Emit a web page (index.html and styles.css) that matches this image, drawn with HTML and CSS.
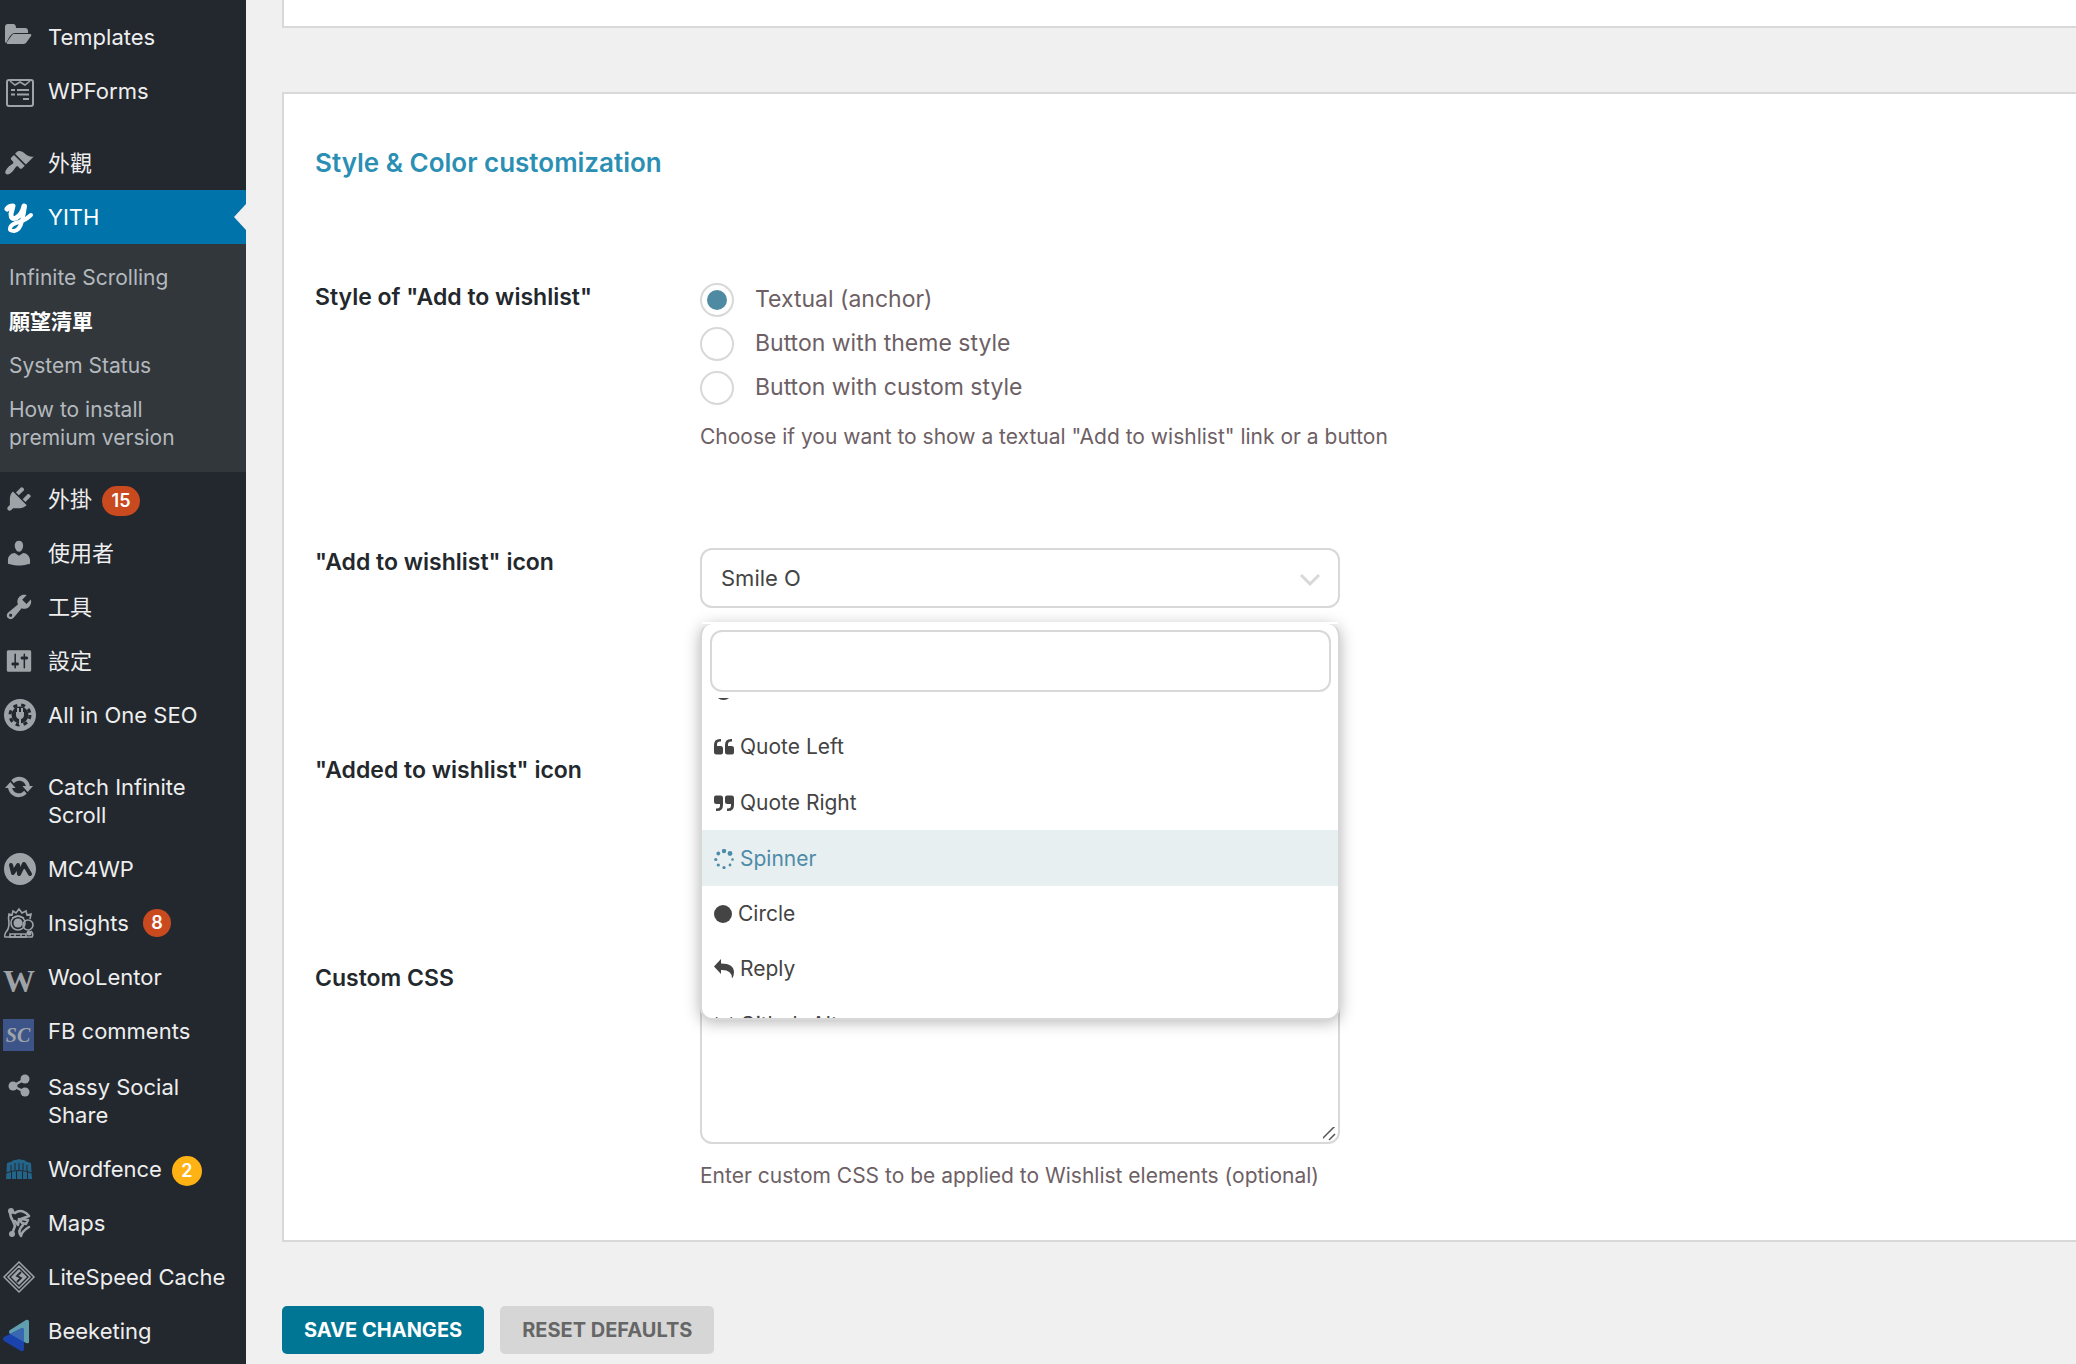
FILE: index.html
```html
<!DOCTYPE html>
<html lang="zh-Hant">
<head>
<meta charset="utf-8">
<meta name="viewport" content="width=device-width, initial-scale=1">
<title>YITH Wishlist</title>
<link rel="stylesheet" href="styles.css">
</head>
<body>
<div class="layout">
  <nav class="sidebar" aria-label="Admin menu">
    <ul class="menu">
      <li><a class="menu-link" href="#"><svg class="icon" viewBox="0 0 32 32"><path d="M2 21V6q0-3 3-3h5q3 0 3 4h9q3 0 3 3v2H12q-3 0-5 3l-4 7z"/><path d="M11 13h16q2 0 1 2l-5 7q-1 1-3 1H5q-2 0-1-2l5-7q1-1 2-1z"/></svg><span>Templates</span></a></li>
      <li><a class="menu-link" href="#"><svg class="icon" viewBox="0 0 32 32"><g fill="none" stroke="currentColor" stroke-width="2"><rect x="4" y="5" width="26" height="26" rx="2"/><path d="M7 6l5 4 5-3 5 3 5-4" stroke-width="1.6"/><path d="M8 15h4M14 15h12M8 19.500h4M14 19.500h12M20 24h6"/></g></svg><span>WPForms</span></a></li>
      <li class="separator"></li>
      <li><a class="menu-link" href="#"><svg class="icon" viewBox="-0.5 -0.5 21 21"><path d="M14.480 11.060L7.410 3.990l1.500-1.500c.5-.56 2.300-.47 3.510.32 1.210.8 1.430 1.280 2.910 2.100 1.180.64 2.450 1.260 4.450.85zm-.71.71L6.700 4.700 4.930 6.470c-.39.39-.39 1.020 0 1.410l1.060 1.060c.39.39.39 1.030 0 1.420-.6.6-1.430 1.110-2.210 1.690-.35.26-.7.53-1.010.84C1.430 14.230.4 16.080 1.400 17.070c.99 1 2.840-.03 4.180-1.360.31-.31.58-.66.85-1.020.57-.78 1.080-1.610 1.690-2.210.39-.39 1.020-.39 1.410 0l1.060 1.060c.39.39 1.020.39 1.410 0z"/></svg><span>外觀</span></a></li>
      <li>
        <a class="menu-link menu-link--current" href="#" aria-current="true"><svg class="icon" viewBox="0 0 32 32"><g fill="none" stroke="currentColor" stroke-linecap="round" stroke-linejoin="round"><path d="M4 8q2-3 6-3-1 4-2 8 0 6 5 4 6-3 8-12" stroke-width="5"/><path d="M22 5q-1 8-3 15-2 9-8 10-5 0-4-3 1-4 9-6 7-2 12-7" stroke-width="4"/></g></svg><span>YITH</span></a>
        <ul class="submenu">
          <li><a class="submenu-link" href="#">Infinite Scrolling</a></li>
          <li><a class="submenu-link submenu-link--current" href="#">願望清單</a></li>
          <li><a class="submenu-link" href="#">System Status</a></li>
          <li><a class="submenu-link" href="#">How to install premium version</a></li>
        </ul>
      </li>
      <li><a class="menu-link" href="#"><svg class="icon" viewBox="-0.5 -0.5 21 21"><path d="M13.110 4.360L9.870 7.600 8 5.730l3.240-3.240c.35-.34 1.050-.2 1.560.32.52.51.66 1.210.31 1.550zm-8 1.770l.91-1.120 9.010 9.010-1.190.84c-.71.71-2.630 1.160-3.820 1.160H6.140L4.900 17.260c-.59.59-1.540.59-2.120 0-.59-.58-.59-1.530 0-2.120l1.240-1.240v-3.880c0-1.130.4-3.190 1.090-3.890zm7.260 3.970l3.240-3.240c.34-.35 1.040-.21 1.550.31.52.51.66 1.210.31 1.550l-3.240 3.250z"/></svg><span>外掛</span><span class="badge badge--wide">15</span></a></li>
      <li><a class="menu-link" href="#"><svg class="icon" viewBox="-0.5 -0.5 21 21"><path d="M10 9.250c-2.270 0-2.730-3.440-2.730-3.440C7 4.020 7.820 2 9.970 2c2.160 0 2.980 2.020 2.710 3.810 0 0-.41 3.440-2.680 3.440zm0 2.570L12.720 10c2.390 0 4.520 2.330 4.520 4.530v2.490s-3.650 1.130-7.240 1.130c-3.650 0-7.240-1.130-7.240-1.130v-2.490c0-2.250 1.940-4.480 4.470-4.480z"/></svg><span>使用者</span></a></li>
      <li><a class="menu-link" href="#"><svg class="icon" viewBox="-0.5 -0.5 21 21"><path d="M16.680 9.770c-1.340 1.340-3.300 1.670-4.950.99l-5.410 6.520c-.99.99-2.590.99-3.580 0s-.99-2.590 0-3.570l6.520-5.420c-.68-1.650-.35-3.610.99-4.950 1.280-1.280 3.120-1.620 4.720-1.060l-2.890 2.890 2.820 2.820 2.860-2.870c.53 1.580.18 3.390-1.080 4.650zM3.810 16.210c.4.39 1.040.39 1.430 0 .4-.4.4-1.040 0-1.430-.39-.4-1.030-.4-1.430 0-.39.39-.39 1.030 0 1.430z"/></svg><span>工具</span></a></li>
      <li><a class="menu-link" href="#"><svg class="icon" viewBox="-0.5 -0.5 21 21"><path d="M18 16V4c0-.55-.45-1-1-1H3c-.55 0-1 .45-1 1v12c0 .55.45 1 1 1h14c.55 0 1-.45 1-1zM8 11h1c.55 0 1 .45 1 1s-.45 1-1 1H8v1.500c0 .28-.22.5-.5.5s-.5-.22-.5-.5V13H6c-.55 0-1-.45-1-1s.45-1 1-1h1V5.500c0-.28.22-.5.5-.5s.5.22.5.5V11zm5-2h-1c-.55 0-1-.45-1-1s.45-1 1-1h1V5.500c0-.28.22-.5.5-.5s.5.22.5.5V7h1c.55 0 1 .45 1 1s-.45 1-1 1h-1v5.500c0 .28-.22.5-.5.5s-.5-.22-.5-.5V9z"/></svg><span>設定</span></a></li>
      <li><a class="menu-link" href="#"><svg class="icon" viewBox="0 0 32 32"><circle cx="17" cy="16" r="16"/><circle cx="17" cy="16" r="8.500" class="cut-ring"/><circle cx="17" cy="16" r="10" class="cut-teeth"/><path d="M13 13h8v3q0 3-3 4v6h-2v-6q-3-1-3-4zM14 9h2v5h-2zM18 9h2v5h-2z"/></svg><span>All in One SEO</span></a></li>
      <li class="separator"></li>
      <li><a class="menu-link" href="#"><svg class="icon" viewBox="-0.5 -0.5 21 21"><path d="M10.200 3.280c3.530 0 6.430 2.610 6.920 6h2.080l-3.500 4-3.500-4h2.320c-.45-1.970-2.210-3.450-4.320-3.450-1.450 0-2.730.71-3.540 1.780L4.950 5.660C6.230 4.200 8.110 3.280 10.200 3.280zm-.4 13.440c-3.520 0-6.430-2.610-6.920-6H.8l3.500-4c1.170 1.330 2.330 2.670 3.500 4H5.480c.45 1.970 2.210 3.450 4.320 3.450 1.450 0 2.730-.71 3.540-1.780l1.710 1.950c-1.280 1.460-3.150 2.380-5.250 2.380z"/></svg><span>Catch Infinite Scroll</span></a></li>
      <li><a class="menu-link" href="#"><svg class="icon" viewBox="0 0 32 32"><circle cx="17" cy="16" r="16"/><path d="M8 12l2 8 5-8 1 9 5-10 6 10" class="cut-line"/></svg><span>MC4WP</span></a></li>
      <li><a class="menu-link" href="#"><svg class="icon" viewBox="0 0 32 32"><g fill="none" stroke="currentColor" stroke-width="1.600"><path d="M6 16q-1-5 0-9l3 1 1-4 3 2 3-4 3 4 4-2 1 4 4-1-1 5"/><path d="M6 16q0 6-3 9-2 4-1 5h27q2-3-1-6"/><circle cx="15" cy="16" r="7"/><circle cx="25" cy="18" r="5"/><path d="M7 27h16v3H7zM12 27v3M18 27v3M9 11l6-2 6 2"/></g><circle cx="15" cy="16" r="4.500"/><circle cx="26" cy="26" r="2.500"/></svg><span>Insights</span><span class="badge badge--small">8</span></a></li>
      <li><a class="menu-link" href="#"><svg class="icon" viewBox="0 0 32 32"><text class="logo-w" x="16" y="31" text-anchor="middle">W</text></svg><span>WooLentor</span></a></li>
      <li><a class="menu-link" href="#"><svg class="icon icon--low" viewBox="0 0 32 32"><rect width="31" height="32" fill="#3d5488"/><text class="logo-sc" x="15" y="23" text-anchor="middle">SC</text></svg><span>FB comments</span></a></li>
      <li class="menu-item--spaced"><a class="menu-link" href="#"><svg class="icon" viewBox="0 0 32 32"><circle cx="22" cy="8" r="4.500"/><circle cx="10" cy="15" r="4.500"/><circle cx="22" cy="21" r="4.500"/><path d="M22 8L10 15l12 6" fill="none" stroke="currentColor" stroke-width="2.500"/></svg><span>Sassy Social Share</span></a></li>
      <li><a class="menu-link" href="#"><svg class="icon" viewBox="0 0 32 32"><g fill="#23648a"><path d="M4 10q5-1 7-3 3 0 5-1 2 1 5 1 2 2 7 3l1 16h-4v-8h-1v8h-4v-8h-1v8h-5v-8h-1v8H9v-8H8v8H3z"/></g><path d="M3 20q13-5 26 0M8 12v6M12 10v7M16 10v7M20 10v7M24 12v6" fill="none" stroke="#23282f" stroke-width="1"/></svg><span>Wordfence</span><span class="badge badge--warn">2</span></a></li>
      <li><a class="menu-link" href="#"><svg class="icon" viewBox="0 0 32 32"><g fill="none" stroke="currentColor" stroke-width="2.500" stroke-linecap="round" stroke-linejoin="round"><path d="M7 4l5 2q5-4 11 0l3 3-8 3 7 1-2 4-4-1-3-4-1 6-3-4"/><path d="M7 4q0 6 3 10l2 5-3 8M20 18q-6 6-2 11 1-5 8-9"/></g><circle cx="8" cy="4" r="3"/><circle cx="9" cy="27" r="3"/></svg><span>Maps</span></a></li>
      <li><a class="menu-link" href="#"><svg class="icon" viewBox="0 0 32 32"><g fill="none" stroke="currentColor" stroke-width="1.500"><path d="M16 1l15 15-15 15L1 16z"/><path d="M16 5l11 11-11 11L5 16z"/></g><path d="M16 8l8 8-8 8-8-8z"/><path d="M18 11l-4 4 4 2-4 4" fill="none" stroke="#23282f" stroke-width="1.800"/></svg><span>LiteSpeed Cache</span></a></li>
      <li><a class="menu-link" href="#"><svg class="icon icon--low" viewBox="0 0 32 32"><path d="M23 1q3-1 3 2v20q0 2-3 1L7 15q-2-2 0-4z" fill="#5f9fae"/><path d="M19 9q2 0 2 3v18q0 3-3 2L1 22q-2-2 0-4z" fill="#1a43ae"/><path d="M19 9q2 0 2 3v11L7 15z" fill="#3a68b0"/></svg><span>Beeketing</span></a></li>
    </ul>
  </nav>

  <main class="content">
    <section class="panel panel--previous" aria-hidden="true"></section>

    <form class="settings">
      <section class="panel">
        <h2 class="panel-title">Style &amp; Color customization</h2>

        <div class="rows">
          <div class="row">
            <div class="row-label" id="style-label">Style of "Add to wishlist"</div>
            <div class="row-field">
              <div class="radios" role="radiogroup" aria-labelledby="style-label">
                <label class="radio"><input type="radio" name="style" checked><span class="radio-text">Textual (anchor)</span></label>
                <label class="radio"><input type="radio" name="style"><span class="radio-text">Button with theme style</span></label>
                <label class="radio"><input type="radio" name="style"><span class="radio-text">Button with custom style</span></label>
              </div>
              <p class="hint">Choose if you want to show a textual "Add to wishlist" link or a button</p>
            </div>
          </div>

          <div class="row row--icon">
            <label class="row-label" for="add-icon">"Add to wishlist" icon</label>
            <div class="row-field">
              <div class="picker">
                <select class="control" id="add-icon"><option>Smile O</option></select>
                <svg class="chevron" viewBox="0 0 20 14"><path d="M1 2l9 9 9-9" fill="none" stroke="#d8d8d8" stroke-width="3"/></svg>
                <div class="dropdown">
                  <input class="control dropdown-search" type="search" aria-label="Search icons">
                  <div class="dropdown-view">
                    <ul class="options" role="listbox" aria-label="Icons">
                      <li class="option" role="option"><svg class="glyph" viewBox="0 0 20 20"><circle cx="9.500" cy="10" r="7.500" fill="none" stroke="currentColor" stroke-width="3"/></svg>Circle O</li>
                      <li class="option" role="option"><svg class="glyph" viewBox="0 0 20 20"><path id="quote" d="M9 11.500v4q0 2-2 2H2.500q-2.500 0-2.500-2.500V8q0-6 6-6h1v2.500H6q-3 0-3 3V9h3.500q2.500 0 2.500 2.500zM20 11.500v4q0 2-2 2h-4.500q-2.500 0-2.500-2.500V8q0-6 6-6h1v2.500h-1q-3 0-3 3V9h3.500q2.500 0 2.500 2.500z"/></svg>Quote Left</li>
                      <li class="option" role="option"><svg class="glyph" viewBox="0 0 20 20"><use href="#quote" transform="rotate(180 10 10)"/></svg>Quote Right</li>
                      <li class="option option--active" role="option" aria-selected="true"><svg class="glyph" viewBox="0 0 20 20"><circle cx="10" cy="2" r="2.200"/><circle cx="16" cy="4.500" r="2.400"/><circle cx="18.500" cy="10.500" r="1.300"/><circle cx="16" cy="16" r="1.400"/><circle cx="10" cy="18.500" r="1.600"/><circle cx="4.300" cy="16" r="1.600"/><circle cx="1.800" cy="10.500" r="1.600"/><circle cx="4.300" cy="4.500" r="1.900"/></svg>Spinner</li>
                      <li class="option option--short" role="option"><svg class="glyph glyph--narrow" viewBox="0 0 18 20"><circle cx="9" cy="10" r="9"/></svg>Circle</li>
                      <li class="option" role="option"><svg class="glyph" viewBox="0 0 20 20"><path d="M7 0v4.500q13 0 13 9 0 3-2 6 0-9-11-8.500V15L0 7.500z"/></svg>Reply</li>
                      <li class="option" role="option"><svg class="glyph" viewBox="0 0 20 20"><path d="M2 2l5 2q3-.6 6 0l5-2q1 3 0 5 2 2 1 6-1 5-9 5t-9-5q-1-4 1-6-1-2 0-5z"/></svg>Github Alt</li>
                    </ul>
                  </div>
                </div>
              </div>
            </div>
          </div>

          <div class="row row--icon">
            <label class="row-label" for="added-icon">"Added to wishlist" icon</label>
            <div class="row-field">
              <select class="control" id="added-icon"></select>
            </div>
          </div>

          <div class="row">
            <label class="row-label" for="custom-css">Custom CSS</label>
            <div class="row-field">
              <textarea class="control control--area" id="custom-css"></textarea>
              <p class="hint">Enter custom CSS to be applied to Wishlist elements (optional)</p>
            </div>
          </div>
        </div>
      </section>

      <div class="actions">
        <button class="button button--primary" type="button">SAVE CHANGES</button>
        <button class="button" type="reset">RESET DEFAULTS</button>
      </div>
    </form>
  </main>
</div>
</body>
</html>
```
FILE: styles.css
```css
* {
  box-sizing: border-box;
}

body {
  margin: 0;
  background: #f0f0f0;
  color: #23282d;
  font: 22px/28px Inter, "Noto Sans CJK TC", sans-serif;
}

ul {
  margin: 0;
  padding: 0;
  list-style: none;
}

.layout {
  display: flex;
  height: 100vh;
  overflow: hidden;
}

/* Sidebar */
.sidebar {
  flex: none;
  width: 246px;
  background: #23282f;
  padding-top: 10px;
}

.menu-link {
  position: relative;
  display: flex;
  align-items: flex-start;
  padding: 13px 8px 13px 3px;
  color: #eee;
  text-decoration: none;
}

.menu-link--current {
  background: #0073aa;
  color: #fff;
}

.menu-link--current::after {
  content: "";
  position: absolute;
  right: 0;
  top: 14px;
  border: 13px solid transparent;
  border-left-width: 0;
  border-right: 12px solid #f0f0f0;
}

.separator {
  height: 18px;
}

.menu-item--spaced {
  margin-top: 2px;
}

.icon {
  flex: none;
  width: 32px;
  height: 32px;
  margin: -2px 13px -2px 0;
  fill: currentColor;
  color: #9ea3a8;
  overflow: visible;
}

.menu-link--current .icon {
  color: #fff;
}

.icon--low {
  margin: 2px 13px -6px 0;
}

.cut-ring,
.cut-teeth {
  fill: #23282f;
}

.cut-teeth {
  fill: none;
  stroke: #23282f;
  stroke-width: 3;
  stroke-dasharray: 4 4;
}

.cut-line {
  fill: none;
  stroke: #23282f;
  stroke-width: 4;
  stroke-linejoin: round;
  stroke-linecap: round;
}

.logo-w {
  font: bold 32px "Liberation Serif", serif;
}

.logo-sc {
  font: italic bold 20px "Liberation Serif", serif;
}

.badge {
  flex: none;
  width: 30px;
  height: 30px;
  margin: 1px 0 -3px 10px;
  border-radius: 15px;
  background: #ca4a1f;
  color: #fff;
  font-size: 18px;
  font-weight: 600;
  line-height: 30px;
  text-align: center;
}

.badge--wide {
  width: 38px;
}

.badge--small {
  width: 28px;
  height: 28px;
  margin: 0 0 0 14px;
  line-height: 28px;
}

.badge--warn {
  background: #ffb214;
}

.submenu {
  padding: 12px 0;
  background: #32373c;
}

.submenu-link {
  display: block;
  padding: 8px 48px 8px 9px;
  color: #b4b9be;
  font-size: 21px;
  text-decoration: none;
}

.submenu-link--current {
  color: #fff;
  font-weight: 700;
}

/* Content */
.content {
  flex: 1;
  min-width: 0;
  padding-left: 36px;
}

.panel {
  border: 2px solid #d8d8d8;
  border-right: 0;
  background: #fff;
  padding: 53px 31px 35px;
}

.panel--previous {
  height: 28px;
  margin-bottom: 64px;
  border-top: 0;
  padding: 0;
}

.panel-title {
  margin: 0 0 104px;
  color: #2b8fb3;
  font-size: 26px;
  font-weight: 600;
  line-height: 32px;
}

.rows {
  display: flex;
  flex-direction: column;
  gap: 97px;
}

.row {
  display: grid;
  grid-template-columns: 385px minmax(0, 1fr);
}

.row--icon {
  min-height: 111px;
}

.row-label {
  font-size: 23px;
  font-weight: 600;
}

.radios {
  display: flex;
  flex-direction: column;
  align-items: flex-start;
  gap: 10px;
}

.radio {
  display: flex;
  align-items: center;
  gap: 21px;
  height: 34px;
  color: #6d6065;
  font-size: 23px;
}

.radio-text {
  padding-bottom: 2px;
}

.radio input {
  appearance: none;
  display: grid;
  place-items: center;
  width: 34px;
  height: 34px;
  margin: 0;
  border: 2px solid #d8d8d8;
  border-radius: 50%;
  background: #fff;
}

.radio input:checked::before {
  content: "";
  width: 20px;
  height: 20px;
  border-radius: 50%;
  background: #4e8ba2;
}

.hint {
  margin: 18px 0 15px;
  color: #6d6065;
  font-size: 21px;
}

.radios + .hint {
  margin-bottom: 0;
}

.control {
  display: block;
  width: 100%;
  max-width: 640px;
  height: 60px;
  margin: 0;
  padding: 0 19px;
  border: 2px solid #d8d8d8;
  border-radius: 12px;
  background: #fff;
  color: #444;
  font: inherit;
  appearance: none;
}

.control--area {
  height: 180px;
  padding: 12px 19px;
  resize: vertical;
}

.control--area::-webkit-scrollbar {
  width: 18px;
}

.control--area::-webkit-resizer {
  background: url("data:image/svg+xml,%3Csvg xmlns='http://www.w3.org/2000/svg' width='18' height='18'%3E%3Cpath d='M1 16L15 2M9 16l6-6' stroke='%23555' stroke-width='1.500'/%3E%3C/svg%3E") no-repeat right bottom;
}

.picker {
  position: relative;
  max-width: 640px;
}

.chevron {
  position: absolute;
  right: 20px;
  top: 25px;
  width: 20px;
  height: 14px;
  pointer-events: none;
}

.dropdown {
  position: absolute;
  z-index: 1;
  top: 76px;
  left: 0;
  right: 0;
  height: 396px;
  padding: 6px;
  border: 2px solid #d8d8d8;
  border-top: 0;
  border-radius: 12px;
  background: #fff;
  box-shadow: 0 2px 16px rgba(0, 0, 0, 0.3);
}

.dropdown::before {
  content: "";
  position: absolute;
  top: -2px;
  left: 0;
  right: 0;
  height: 2px;
  background: #fff;
}

.dropdown-search {
  height: 62px;
  margin-left: 2px;
  width: calc(100% - 3px);
}

/* The list is scrolled part of the way through the "Circle O" option. */
.dropdown-view {
  height: 320px;
  margin: 6px -6px 0;
  border-radius: 0 0 10px 10px;
  overflow: hidden;
}

.options {
  margin-top: -36px;
}

.option {
  display: flex;
  align-items: center;
  gap: 6px;
  height: 56px;
  padding: 2px 12px 0;
  color: #444;
  font-size: 21px;
}

.option--short {
  height: 54px;
}

.option--active {
  background: #e7eff1;
  color: #4e8ba8;
}

.glyph {
  width: 20px;
  height: 20px;
  fill: currentColor;
}

.glyph--narrow {
  width: 18px;
}

.actions {
  display: flex;
  gap: 16px;
  margin-top: 64px;
}

.button {
  height: 48px;
  padding: 0 22px;
  border: 0;
  border-radius: 5px;
  background: #d6d6d6;
  color: #666;
  font: 700 20px/48px Inter, sans-serif;
}

.button--primary {
  background: #007694;
  color: #fff;
}
```
